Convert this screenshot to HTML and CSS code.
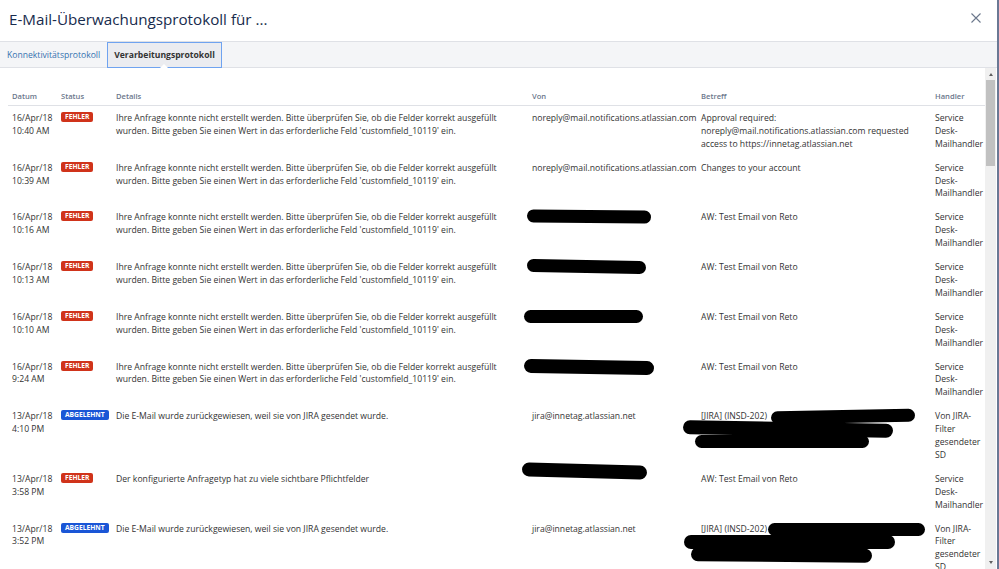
FILE: index.html
```html
<!DOCTYPE html>
<html lang="de">
<head>
<meta charset="utf-8">
<title>E-Mail-Überwachungsprotokoll</title>
<link rel="stylesheet" href="styles.css">
</head>
<body>
<div class="dialog">
  <header class="dialog-header">
    <h1 class="dialog-title">E-Mail-Überwachungsprotokoll für ...</h1>
    <button class="close" aria-label="Schließen">
      <svg width="10" height="10" viewBox="0 0 10 10"><path d="M0.5 0.5 L9.5 9.5 M9.5 0.5 L0.5 9.5" stroke="#6b778c" stroke-width="1.1" fill="none"/></svg>
    </button>
  </header>
  <nav class="tabs">
    <a class="tab">Konnektivitätsprotokoll</a>
    <a class="tab active">Verarbeitungsprotokoll<span class="notch"></span></a>
  </nav>
  <div class="body">
    <div class="scroll-area">
      <table class="log">
        <colgroup>
          <col class="c-date"><col class="c-status"><col class="c-details"><col class="c-from"><col class="c-subject"><col class="c-handler">
        </colgroup>
        <thead>
          <tr><th>Datum</th><th>Status</th><th>Details</th><th>Von</th><th>Betreff</th><th>Handler</th></tr>
        </thead>
        <tbody>
          <tr>
            <td>16/Apr/18 10:40 AM</td>
            <td><span class="lozenge error">Fehler</span></td>
            <td>Ihre Anfrage konnte nicht erstellt werden. Bitte überprüfen Sie, ob die Felder korrekt ausgefüllt wurden. Bitte geben Sie einen Wert in das erforderliche Feld 'customfield_10119' ein.</td>
            <td>noreply@mail.notifications.atlassian.com</td>
            <td>Approval required: noreply@mail.notifications.atlassian.com requested access to https://innetag.atlassian.net</td>
            <td>Service Desk-Mailhandler</td>
          </tr>
          <tr>
            <td>16/Apr/18 10:39 AM</td>
            <td><span class="lozenge error">Fehler</span></td>
            <td>Ihre Anfrage konnte nicht erstellt werden. Bitte überprüfen Sie, ob die Felder korrekt ausgefüllt wurden. Bitte geben Sie einen Wert in das erforderliche Feld 'customfield_10119' ein.</td>
            <td>noreply@mail.notifications.atlassian.com</td>
            <td>Changes to your account</td>
            <td>Service Desk-Mailhandler</td>
          </tr>
          <tr>
            <td>16/Apr/18 10:16 AM</td>
            <td><span class="lozenge error">Fehler</span></td>
            <td>Ihre Anfrage konnte nicht erstellt werden. Bitte überprüfen Sie, ob die Felder korrekt ausgefüllt wurden. Bitte geben Sie einen Wert in das erforderliche Feld 'customfield_10119' ein.</td>
            <td><span class="redact r-a"></span></td>
            <td>AW: Test Email von Reto</td>
            <td>Service Desk-Mailhandler</td>
          </tr>
          <tr>
            <td>16/Apr/18 10:13 AM</td>
            <td><span class="lozenge error">Fehler</span></td>
            <td>Ihre Anfrage konnte nicht erstellt werden. Bitte überprüfen Sie, ob die Felder korrekt ausgefüllt wurden. Bitte geben Sie einen Wert in das erforderliche Feld 'customfield_10119' ein.</td>
            <td><span class="redact r-b"></span></td>
            <td>AW: Test Email von Reto</td>
            <td>Service Desk-Mailhandler</td>
          </tr>
          <tr>
            <td>16/Apr/18 10:10 AM</td>
            <td><span class="lozenge error">Fehler</span></td>
            <td>Ihre Anfrage konnte nicht erstellt werden. Bitte überprüfen Sie, ob die Felder korrekt ausgefüllt wurden. Bitte geben Sie einen Wert in das erforderliche Feld 'customfield_10119' ein.</td>
            <td><span class="redact r-c"></span></td>
            <td>AW: Test Email von Reto</td>
            <td>Service Desk-Mailhandler</td>
          </tr>
          <tr>
            <td>16/Apr/18 9:24 AM</td>
            <td><span class="lozenge error">Fehler</span></td>
            <td>Ihre Anfrage konnte nicht erstellt werden. Bitte überprüfen Sie, ob die Felder korrekt ausgefüllt wurden. Bitte geben Sie einen Wert in das erforderliche Feld 'customfield_10119' ein.</td>
            <td><span class="redact r-d"></span></td>
            <td>AW: Test Email von Reto</td>
            <td>Service Desk-Mailhandler</td>
          </tr>
          <tr>
            <td>13/Apr/18 4:10 PM</td>
            <td><span class="lozenge rejected">Abgelehnt</span></td>
            <td>Die E-Mail wurde zurückgewiesen, weil sie von JIRA gesendet wurde.</td>
            <td>jira@innetag.atlassian.net</td>
            <td class="subject-redacted">
              <span class="subj-line">[JIRA] (INSD-202) <span class="redact s1"></span></span>
              <span class="redact s2"></span>
              <span class="redact s3"></span>
            </td>
            <td>Von JIRA-Filter gesendeter SD</td>
          </tr>
          <tr>
            <td>13/Apr/18 3:58 PM</td>
            <td><span class="lozenge error">Fehler</span></td>
            <td>Der konfigurierte Anfragetyp hat zu viele sichtbare Pflichtfelder</td>
            <td><span class="redact r-e"></span></td>
            <td>AW: Test Email von Reto</td>
            <td>Service Desk-Mailhandler</td>
          </tr>
          <tr>
            <td>13/Apr/18 3:52 PM</td>
            <td><span class="lozenge rejected">Abgelehnt</span></td>
            <td>Die E-Mail wurde zurückgewiesen, weil sie von JIRA gesendet wurde.</td>
            <td>jira@innetag.atlassian.net</td>
            <td class="subject-redacted">
              <span class="subj-line">[JIRA] (INSD-202)<span class="redact t1"></span></span>
              <span class="redact t2"></span>
              <span class="redact t3"></span>
            </td>
            <td>Von JIRA-Filter gesendeter SD</td>
          </tr>
        </tbody>
      </table>
    </div>
    <div class="scrollbar">
      <span class="sb-arrow up"></span>
      <div class="sb-track"><div class="sb-thumb"></div></div>
      <span class="sb-arrow down"></span>
    </div>
  </div>
</div>
</body>
</html>
```

FILE: styles.css
```css
* { box-sizing: border-box; }
html, body { margin: 0; padding: 0; background: #fff; }
body {
  font-family: "Open Sans", "Noto Sans", "DejaVu Sans", sans-serif;
  color: #333;
}
.dialog {
  width: 999px;
  height: 569px;
  overflow: hidden;
  border-right: 2px solid #6a7894;
  display: flex;
  flex-direction: column;
}
.dialog-header {
  height: 42px;
  flex: none;
  display: flex;
  align-items: center;
  justify-content: space-between;
  padding: 0 16px 3px 9px;
  border-bottom: 1px solid #dfe1e6;
}
.dialog-title {
  margin: 0;
  font-size: 15.2px;
  font-weight: 400;
  color: #172b4d;
  letter-spacing: 0;
}
.close {
  border: 0;
  background: none;
  padding: 0;
  width: 10px;
  height: 10px;
  display: flex;
  margin-top: -3px;
}
.tabs {
  height: 26px;
  flex: none;
  display: flex;
  align-items: stretch;
  background: #f4f5f7;
  border-bottom: 1px solid #dfe1e6;
  padding-left: 0;
}
.tab {
  display: flex;
  align-items: center;
  padding: 0 7px;
  font-size: 8.6px;
  color: #3572b0;
  position: relative;
}
.tab.active {
  margin-left: 0;
  background: #ebecf0;
  border: 1.5px solid #6fa3f0;
  color: #333;
  font-weight: 700;
  padding: 0 6px;
  margin-bottom: -1px;
}
.notch {
  position: absolute;
  left: 50%;
  bottom: -1px;
  margin-left: -4px;
  width: 0;
  height: 0;
  border-left: 4px solid transparent;
  border-right: 4px solid transparent;
  border-bottom: 4px solid #fff;
}
.body {
  flex: 1;
  display: flex;
  min-height: 0;
}
.scroll-area {
  flex: 1;
  overflow: hidden;
  padding: 21px 0 0 8px;
}
.log {
  table-layout: fixed;
  border-collapse: collapse;
  width: 978px;
  font-size: 8.65px;
  line-height: 12.9px;
}
.c-date { width: 49px; }
.c-status { width: 55px; }
.c-details { width: 416px; }
.c-from { width: 169px; }
.c-subject { width: 234px; }
.c-handler { width: 55px; }
.log th {
  text-align: left;
  font-weight: 600;
  font-size: 7.6px;
  color: #6b778c;
  padding: 1px 4px 2px;
  border-bottom: 1px solid #dfe1e6;
}
.log td {
  vertical-align: top;
  padding: 6px 4px 5px;
  overflow-wrap: normal;
}
.lozenge {
  display: inline-block;
  font-size: 6.7px;
  line-height: 10px;
  height: 10px;
  font-weight: 700;
  text-transform: uppercase;
  color: #fff;
  border-radius: 2px;
  padding: 0 4px;
  vertical-align: top;
  margin-top: 0;
}
.lozenge.error { background: #d0331a; }
.lozenge.rejected { background: #1a56d6; }
.redact {
  display: block;
  background: #000;
  border-radius: 7px;
}
.r-a { width: 124px; height: 13px; margin: -1px 0 0 -5px; transform: rotate(0.6deg); }
.r-b { width: 119px; height: 13px; margin: -1px 0 0 -5px; transform: rotate(1.2deg); }
.r-c { width: 119px; height: 13px; margin: -1px 0 0 -8px; }
.r-d { width: 130px; height: 14px; margin: -1px 0 0 -8px; transform: rotate(1deg); }
.r-e { width: 125px; height: 14px; margin: -9px 0 0 -10px; transform: rotate(1.5deg); }
.subject-redacted { position: relative; }
.subj-line { display: flex; align-items: center; white-space: nowrap; }
.subj-line .redact { display: inline-block; flex: none; }
.s1 { width: 144px; height: 13px; margin-left: 4px; transform: rotate(-1deg); }
.s2 { width: 210px; height: 14px; margin: -1px 0 0 -18px; transform: rotate(1deg); }
.s3 { width: 174px; height: 13px; margin: -1px 0 0 -6px; }
.t1 { width: 157px; height: 13px; margin-left: 1px; }
.t2 { width: 211px; height: 14px; margin: -1px 0 0 -17px; }
.t3 { width: 181px; height: 14px; margin: -1px 0 0 -10px; transform: rotate(0.5deg); }
.scrollbar {
  width: 11px;
  flex: none;
  background: #f0f0f0;
  display: flex;
  flex-direction: column;
  align-items: center;
  margin-right: 1px;
  padding: 2px 0;
}
.sb-arrow {
  width: 0;
  height: 0;
  border-left: 2.5px solid transparent;
  border-right: 2.5px solid transparent;
  flex: none;
  margin: 3px 0;
}
.sb-arrow.up { border-bottom: 3px solid #606060; }
.sb-arrow.down { border-top: 3px solid #606060; }
.sb-track { flex: 1; width: 100%; padding: 0 1px; }
.sb-thumb { width: 100%; height: 86px; background: #c1c1c1; margin-top: 1px; }
```
